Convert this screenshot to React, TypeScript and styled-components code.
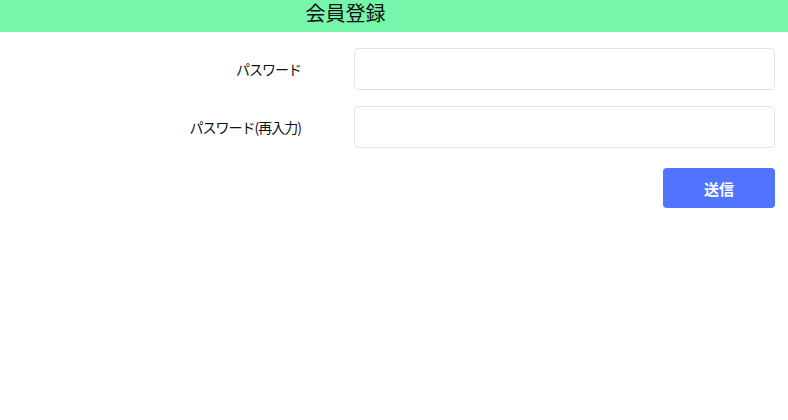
import React from "react";
import styled, { createGlobalStyle } from "styled-components";

const GlobalStyle = createGlobalStyle`
  body {
    margin: 0;
    background: #ffffff;
    font-family: "Noto Sans CJK JP", "Noto Sans", sans-serif;
    color: #111;
  }
`;

const Header = styled.header`
  height: 32px;
  background: #77f5ab;
  display: grid;
  grid-template-columns: 691px 1fr;
`;

const Title = styled.h1`
  margin: 0;
  font-size: 20px;
  font-weight: 400;
  line-height: 26px;
  text-align: center;
`;

const Form = styled.form`
  display: grid;
  grid-template-columns: 1fr 421px;
  column-gap: 53px;
  row-gap: 16px;
  padding: 16px 13px 0 0;
`;

const Label = styled.label`
  font-size: 14px;
  text-align: right;
  align-self: center;
  letter-spacing: -1px;
`;

const Input = styled.input`
  box-sizing: border-box;
  height: 42px;
  width: 100%;
  border: 1px solid #e3e3e3;
  border-radius: 4px;
  padding: 0 12px;
  font-size: 14px;
  outline: none;
`;

const Actions = styled.div`
  grid-column: 2;
  display: flex;
  justify-content: flex-end;
  margin-top: 4px;
`;

const Button = styled.button`
  width: 112px;
  height: 40px;
  border: none;
  border-radius: 4px;
  background: #5174ff;
  color: #fff;
  font-family: inherit;
  font-size: 15px;
  font-weight: 700;
`;

export default function App() {
  return (
    <>
      <GlobalStyle />
      <Header>
        <Title>会員登録</Title>
      </Header>
      <Form onSubmit={(e) => e.preventDefault()}>
        <Label htmlFor="pw">パスワード</Label>
        <Input id="pw" type="password" />
        <Label htmlFor="pw2">パスワード(再入力)</Label>
        <Input id="pw2" type="password" />
        <Actions>
          <Button type="submit">送信</Button>
        </Actions>
      </Form>
    </>
  );
}
